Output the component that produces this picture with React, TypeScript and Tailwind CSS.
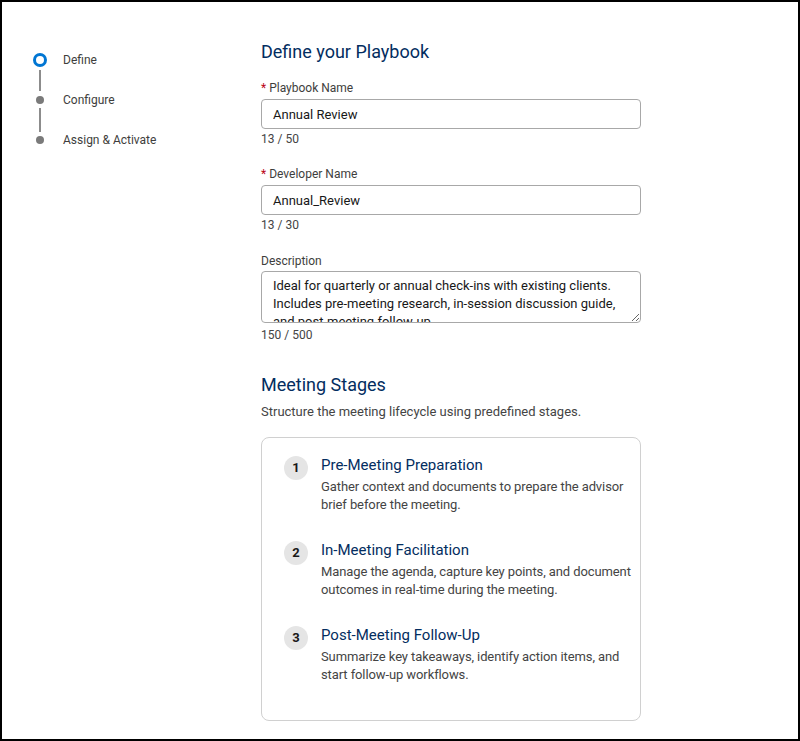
import { useState } from 'react';

const font = { fontFamily: 'Roboto, "Liberation Sans", sans-serif' };

const steps = ['Define', 'Configure', 'Assign & Activate'];

const stages = [
  {
    title: 'Pre-Meeting Preparation',
    text: 'Gather context and documents to prepare the advisor brief before the meeting.',
  },
  {
    title: 'In-Meeting Facilitation',
    text: 'Manage the agenda, capture key points, and document outcomes in real-time during the meeting.',
  },
  {
    title: 'Post-Meeting Follow-Up',
    text: 'Summarize key takeaways, identify action items, and start follow-up workflows.',
  },
];

function Stepper() {
  return (
    <div className="flex flex-col pt-[51px] pl-[31px]">
      {/* Define (current) */}
      <div className="flex items-center h-[14px]">
        <div className="w-[14px] h-[14px] rounded-full border-[3px] border-[#0176d3] bg-white" />
        <span className="ml-[16px] text-[12px] text-[#3e3e3c]">{steps[0]}</span>
      </div>
      <div className="flex w-[14px] justify-center h-[27px] py-[3px]">
        <div className="w-[2px] h-full bg-[#8c8c8c]" />
      </div>
      <div className="flex items-center h-[12px]">
        <div className="w-[14px] flex justify-center">
          <div className="w-[8px] h-[8px] rounded-full bg-[#7a7a7a]" />
        </div>
        <span className="ml-[16px] text-[12px] text-[#3e3e3c]">{steps[1]}</span>
      </div>
      <div className="flex w-[14px] justify-center h-[28px] py-[2px]">
        <div className="w-[2px] h-full bg-[#8c8c8c]" />
      </div>
      <div className="flex items-center h-[12px]">
        <div className="w-[14px] flex justify-center">
          <div className="w-[8px] h-[8px] rounded-full bg-[#7a7a7a]" />
        </div>
        <span className="ml-[16px] text-[12px] text-[#3e3e3c]">{steps[2]}</span>
      </div>
    </div>
  );
}

function Label({ text, required }: { text: string; required?: boolean }) {
  return (
    <div className="text-[12px] leading-[16px] text-[#3e3e3c]">
      {required && <span className="text-[#ba0517] mr-[3px]">*</span>}
      {text}
    </div>
  );
}

export default function App() {
  const [name, setName] = useState('Annual Review');
  const [devName, setDevName] = useState('Annual_Review');
  const [desc, setDesc] = useState(
    'Ideal for quarterly or annual check-ins with existing clients. Includes pre-meeting research, in-session discussion guide, and post-meeting follow-up.'
  );

  return (
    <div style={font} className="w-[800px] h-[741px] border-2 border-black bg-white flex overflow-hidden">
      <div className="w-[259px] shrink-0">
        <Stepper />
      </div>

      <div className="w-[380px] pt-[38px] flex flex-col">
        <h1 className="text-[18px] leading-[24px] text-[#032d60]">Define your Playbook</h1>

        <div className="mt-[16px]">
          <Label text="Playbook Name" required />
          <input
            value={name}
            onChange={(e) => setName(e.target.value)}
            className="mt-[3px] w-full h-[30px] px-[11px] border border-[#a8a8a8] rounded-[4px] text-[13px] text-[#181818] outline-none"
          />
          <div className="mt-[2px] text-[12px] leading-[16px] text-[#444444]">13 / 50</div>
        </div>

        <div className="mt-[19px]">
          <Label text="Developer Name" required />
          <input
            value={devName}
            onChange={(e) => setDevName(e.target.value)}
            className="mt-[3px] w-full h-[30px] px-[11px] border border-[#a8a8a8] rounded-[4px] text-[13px] text-[#181818] outline-none"
          />
          <div className="mt-[2px] text-[12px] leading-[16px] text-[#444444]">13 / 30</div>
        </div>

        <div className="mt-[20px]">
          <Label text="Description" />
          <textarea
            value={desc}
            onChange={(e) => setDesc(e.target.value)}
            className="mt-[2px] block w-full h-[52px] px-[11px] pt-[5px] border border-[#a8a8a8] rounded-[4px] text-[13px] leading-[18px] text-[#181818] outline-none resize-y"
          />
          <div className="mt-[4px] text-[12px] leading-[16px] text-[#444444]">150 / 500</div>
        </div>

        <h2 className="mt-[30px] text-[18px] leading-[24px] text-[#032d60]">Meeting Stages</h2>
        <p className="mt-[6px] text-[13px] leading-[18px] text-[#444444]">
          Structure the meeting lifecycle using predefined stages.
        </p>

        <div className="mt-[16px] h-[284px] border border-[#d0d0d0] rounded-[8px] pt-[17px] pl-[22px] pr-[4px] flex flex-col gap-[26px]">
          {stages.map((s, i) => (
            <div key={i} className="flex items-start">
              <div className="mt-[1px] w-[24px] h-[24px] shrink-0 rounded-full bg-[#e5e5e5] flex items-center justify-center text-[13px] font-bold text-[#181818]">
                {i + 1}
              </div>
              <div className="ml-[13px]">
                <div className="text-[15px] leading-[20px] text-[#032d60]">{s.title}</div>
                <div className="mt-[3px] text-[13px] leading-[18px] tracking-[-0.1px] text-[#444444]">{s.text}</div>
              </div>
            </div>
          ))}
        </div>
      </div>
    </div>
  );
}
